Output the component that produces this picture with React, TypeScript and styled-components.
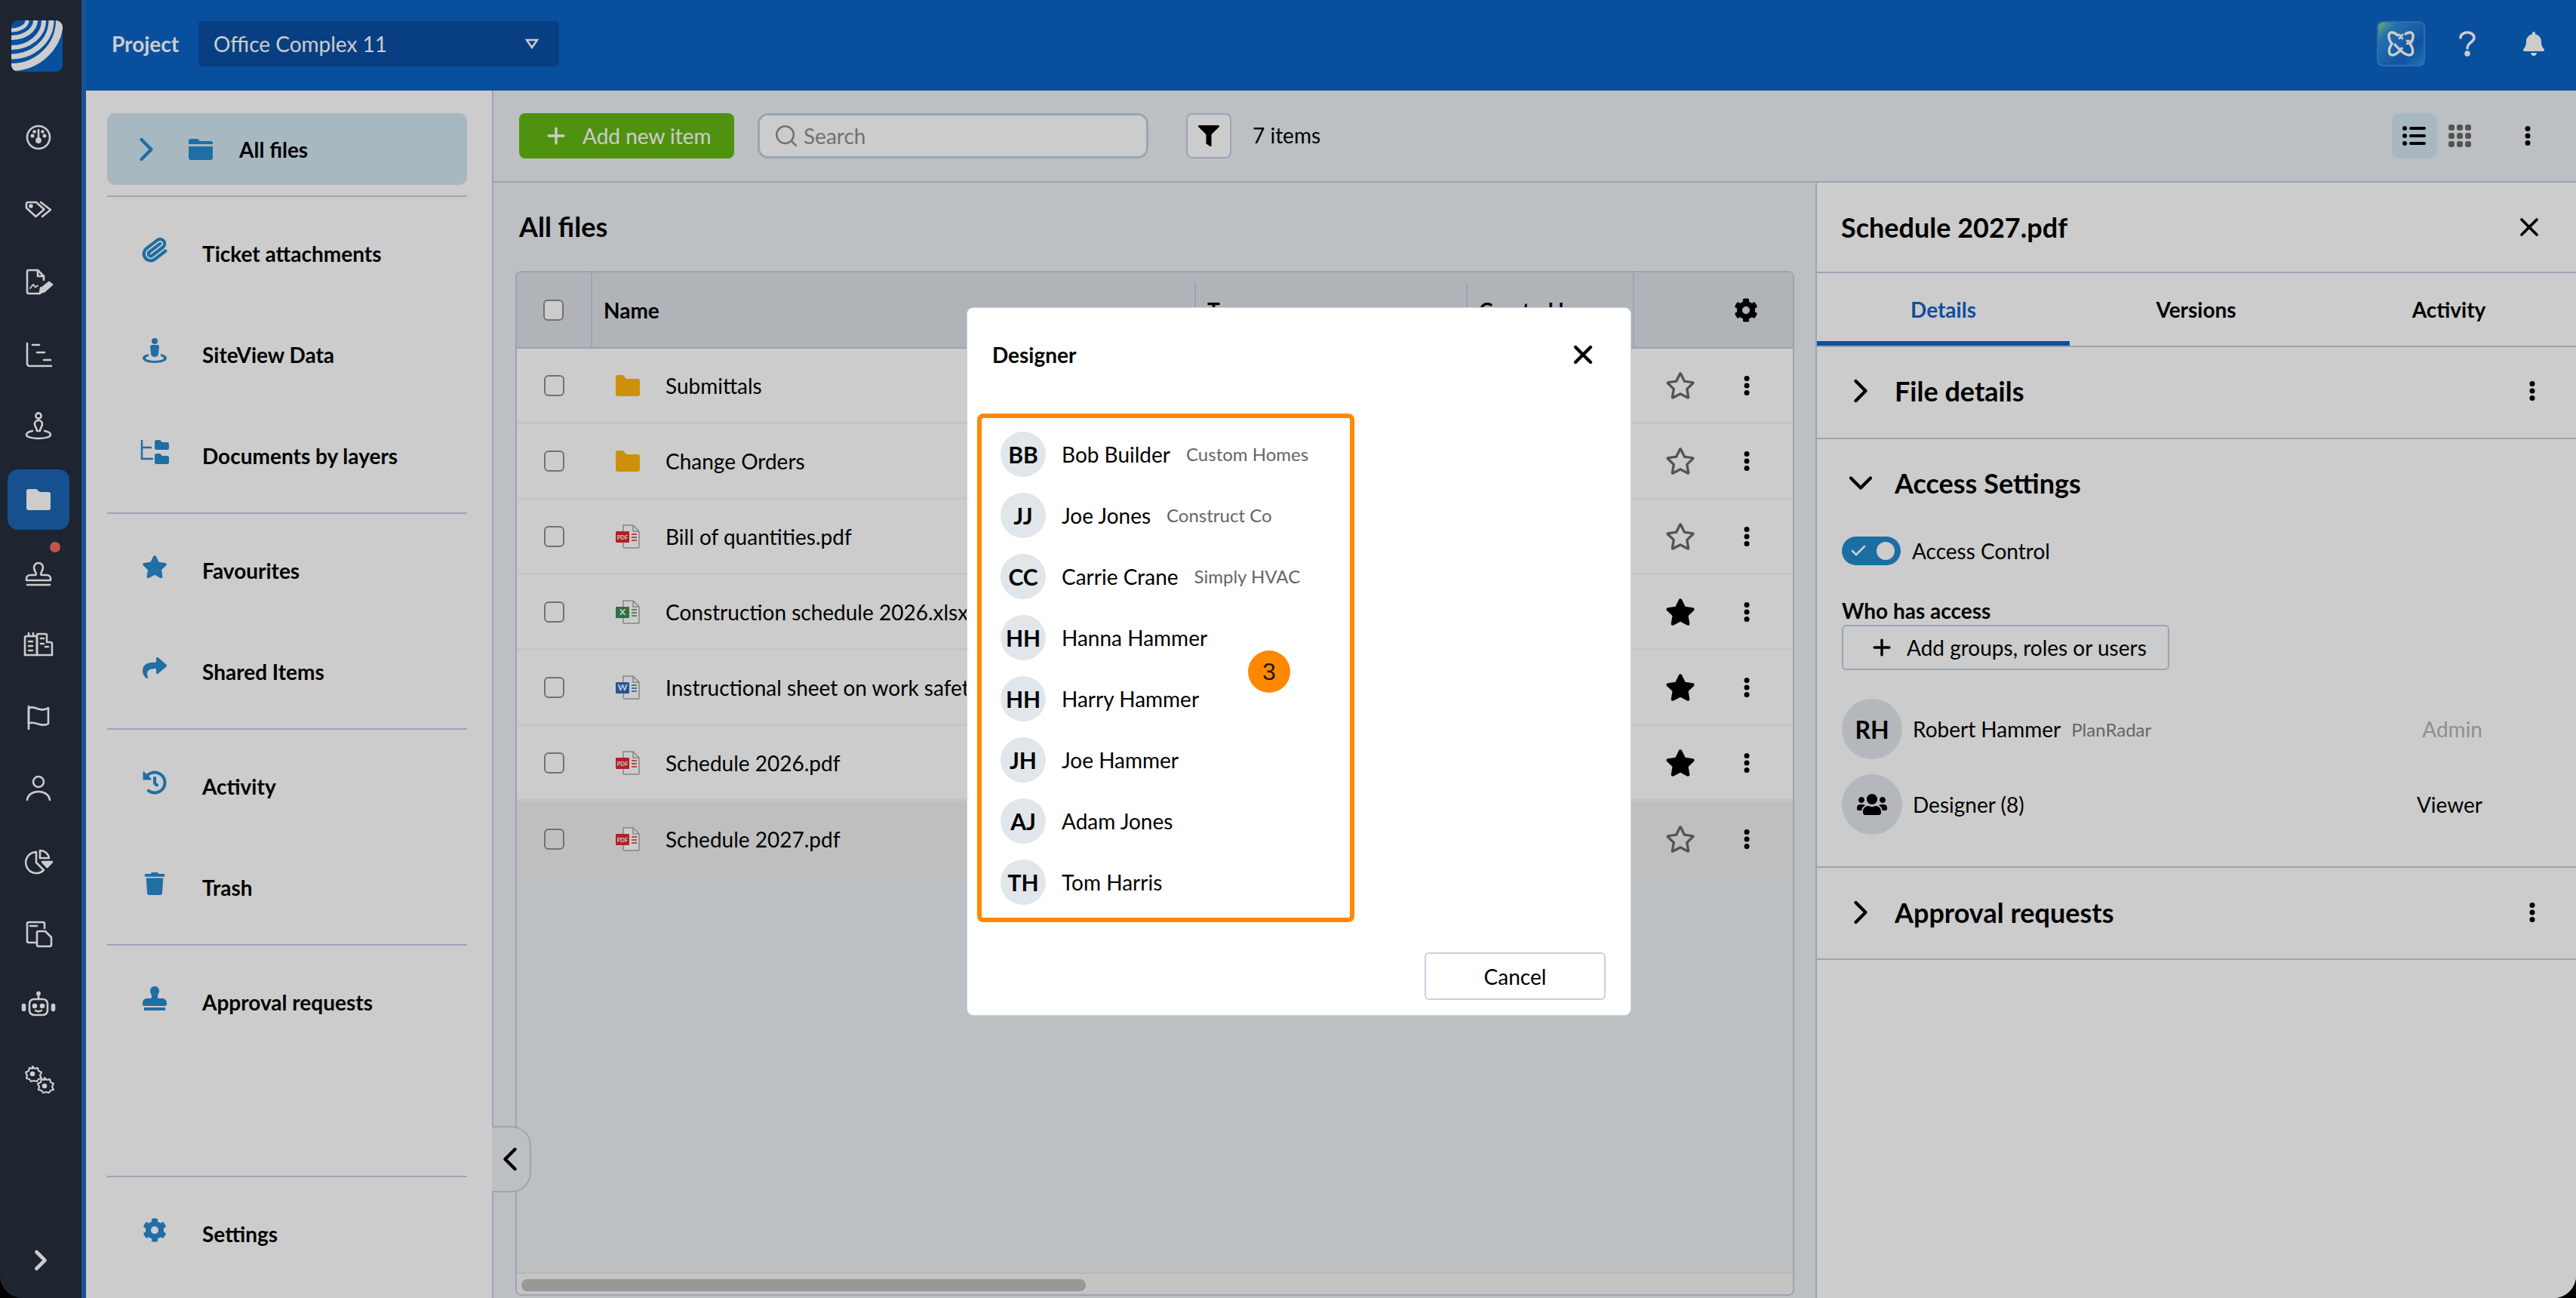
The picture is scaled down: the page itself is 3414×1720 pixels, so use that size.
import React from 'react';
import styled, { createGlobalStyle } from 'styled-components';
import { FaStar, FaRegStar, FaShare, FaHistory, FaTrash, FaStamp, FaCog, FaUsers, FaFilter, FaBell } from 'react-icons/fa';
import { ChevronRight, ChevronDown, ChevronLeft, Paperclip, Plus, Search, X, Check } from 'lucide-react';

const GlobalStyle = createGlobalStyle`
  html, body { margin: 0; padding: 0; background: #000; }
  * { box-sizing: border-box; }
  body { font-family: Lato, "Open Sans", sans-serif; color: #000; }
`;

const Page = styled.div`
  position: relative;
  display: flex;
  width: 3414px;
  height: 1720px;
  overflow: hidden;
  border-radius: 0 0 30px 30px;
`;

const Rail = styled.aside`
  flex: 0 0 114px;
  display: flex;
  flex-direction: column;
  background: #262e3c;
  border-right: 6px solid #2168b6;
  color: #fff;
`;

const LogoBox = styled.svg`
  display: block;
  width: 68px;
  height: 68px;
  margin: 27px 0 39px 15px;
  flex: none;
`;

const RailItem = styled.div<{ $active?: boolean }>`
  position: relative;
  display: flex;
  align-items: center;
  justify-content: center;
  width: 82px;
  height: 80px;
  margin: 8px 0 8px 10px;
  border-radius: 14px;
  background: ${(p) => (p.$active ? '#1c64b3' : 'transparent')};
`;

const RedDot = styled.span`
  position: absolute;
  left: 56px;
  top: 0;
  width: 14px;
  height: 14px;
  border-radius: 50%;
  background: #f26a5c;
`;

const RailFoot = styled.div`
  margin: auto 0 28px 0;
  display: flex;
  justify-content: center;
`;

const Column = styled.div`
  flex: 1;
  min-width: 0;
  display: flex;
  flex-direction: column;
`;

const TopBar = styled.header`
  flex: 0 0 120px;
  display: flex;
  align-items: flex-start;
  padding: 28px 0 0 34px;
  background: #0a64c6;
  color: #fff;
`;

const ProjectLabel = styled.div`
  width: 115px;
  height: 60px;
  line-height: 60px;
  font-size: 28px;
  font-weight: 700;
`;

const ProjectSelect = styled.div`
  width: 478px;
  height: 60px;
  display: flex;
  align-items: center;
  justify-content: space-between;
  padding: 0 26px 0 20px;
  background: #094fa3;
  border-radius: 4px;
  font-size: 28px;
`;

const TopActions = styled.div`
  margin-left: auto;
  display: flex;
  align-items: center;
  height: 60px;
`;

const AiButton = styled.div`
  width: 64px;
  height: 60px;
  display: flex;
  align-items: center;
  justify-content: center;
  border-radius: 8px;
  border: 2px solid #3f86dc;
  background: linear-gradient(135deg, #8fdc7e 0%, #2a8fdc 22%, #1668c8 70%, #2a8fdc 100%);
`;

const TopIcon = styled.div<{ $w: number }>`
  display: flex;
  align-items: center;
  justify-content: center;
  width: ${(p) => p.$w}px;
`;

const Body = styled.div`
  flex: 1;
  min-height: 0;
  display: flex;
`;

const NavPanel = styled.nav`
  flex: 0 0 540px;
  display: flex;
  flex-direction: column;
  padding: 30px 33px 18px 28px;
  background: #fff;
  border-right: 2px solid #c2cee1;
`;

const NavSelected = styled.div`
  flex: none;
  height: 95px;
  margin-bottom: 6px;
  display: flex;
  align-items: center;
  border-radius: 10px;
  background: #d3e7f2;
  font-size: 28px;
  font-weight: 700;
  color: #000;
`;

const NavChevron = styled.span`
  display: flex;
  width: 108px;
  padding-left: 26px;
  color: #278acd;
`;

const NavFolder = styled.span`
  display: flex;
  width: 67px;
  color: #278acd;
`;

const Divider = styled.div<{ $auto?: boolean }>`
  flex: none;
  height: 2px;
  margin: ${(p) => (p.$auto ? 'auto 0 8px' : '8px 0')};
  background: #c2cee1;
`;

const NavItem = styled.div`
  flex: none;
  height: 134px;
  display: flex;
  align-items: center;
  font-size: 28px;
  font-weight: 700;
`;

const NavIcon = styled.span`
  display: flex;
  justify-content: center;
  width: 126px;
  margin-top: -10px;
  color: #278acd;
`;

const Main = styled.main`
  flex: 1;
  min-width: 0;
  display: flex;
  flex-direction: column;
  background: #ebf0f4;
`;

const Toolbar = styled.div`
  flex: 0 0 122px;
  display: flex;
  align-items: flex-start;
  padding: 30px 60px 0 34px;
  border-bottom: 2px solid #c2cee1;
`;

const AddButton = styled.div`
  width: 285px;
  height: 60px;
  display: flex;
  align-items: center;
  gap: 18px;
  padding-left: 32px;
  border-radius: 8px;
  background: #63b713;
  color: #fff;
  font-size: 28px;
`;

const SearchBox = styled.div`
  width: 518px;
  height: 60px;
  margin-left: 31px;
  display: flex;
  align-items: center;
  gap: 6px;
  padding-left: 18px;
  border: 3px solid #c2cee1;
  border-radius: 14px;
  background: #fff;
  color: #8f8f8f;
  font-size: 28px;
`;

const FilterButton = styled.div`
  width: 60px;
  height: 60px;
  margin-left: 50px;
  display: flex;
  align-items: center;
  justify-content: center;
  border: 2px solid #c2cee1;
  border-radius: 8px;
  background: #fff;
`;

const ItemCount = styled.div`
  height: 60px;
  line-height: 58px;
  margin-left: 28px;
  font-size: 28px;
`;

const ViewGroup = styled.div`
  margin-left: auto;
  display: flex;
  align-items: center;
  height: 60px;
`;

const ViewButton = styled.div<{ $active?: boolean }>`
  width: 60px;
  height: 60px;
  display: flex;
  align-items: center;
  justify-content: center;
  border-radius: 10px;
  background: ${(p) => (p.$active ? '#d3e7f2' : 'transparent')};
`;

const MoreButton = styled.div`
  display: flex;
  margin-left: 56px;
`;

const Panes = styled.div`
  flex: 1;
  min-height: 0;
  display: flex;
`;

const CenterPane = styled.section`
  position: relative;
  flex: 1;
  min-width: 0;
  display: flex;
  flex-direction: column;
  padding: 0 28px 3px 29px;
`;

const PaneTitle = styled.h1`
  flex: 0 0 113px;
  margin: 0;
  padding: 0 0 0 5px;
  line-height: 117px;
  font-size: 36px;
  font-weight: 700;
`;

const Table = styled.div`
  flex: 1;
  min-height: 0;
  display: flex;
  flex-direction: column;
  border: 2px solid #c2cee1;
  border-radius: 8px;
  overflow: hidden;
`;

const HeadRow = styled.div`
  flex: 0 0 101px;
  display: flex;
  align-items: stretch;
  background: #dde2e6;
  border-bottom: 2px solid #c2cee1;
  font-size: 28px;
  font-weight: 700;
`;

const CheckCell = styled.div<{ $head?: boolean }>`
  flex: 0 0 100px;
  display: flex;
  align-items: center;
  justify-content: center;
  padding-right: 2px;
  border-right: ${(p) => (p.$head ? '2px solid #c2cee1' : 'none')};
`;

const CheckBox = styled.span<{ $head?: boolean }>`
  width: 27px;
  height: 28px;
  border: 2px solid #8a8f96;
  border-radius: 6px;
  background: ${(p) => (p.$head ? '#fff' : 'transparent')};
`;

const HeadCell = styled.div<{ $w: number; $line?: boolean }>`
  flex: 0 0 ${(p) => p.$w}px;
  display: flex;
  align-items: center;
  padding-left: ${(p) => (p.$line ? 17 : 15)}px;
  position: relative;
  ${(p) =>
    p.$line
      ? `&::before { content: ''; position: absolute; left: 0; top: 13px; bottom: 13px; width: 2px; background: #c2cee1; }`
      : ''}
`;

const HeadGear = styled.div`
  flex: 1;
  display: flex;
  align-items: center;
  justify-content: flex-end;
  padding-right: 46px;
  border-left: 2px solid #c2cee1;
`;

const FileRow = styled.div<{ $selected?: boolean }>`
  flex: 0 0 100px;
  display: flex;
  align-items: center;
  background: ${(p) => (p.$selected ? '#efefef' : '#fff')};
  border-bottom: ${(p) => (p.$selected ? 'none' : '3px solid #f5f5f5')};
  font-size: 28px;
`;

const FileIconWrap = styled.span`
  flex: 0 0 66px;
  display: flex;
  margin-left: 31px;
`;

const FileName = styled.span`
  flex: 0 1 400px;
  min-width: 0;
  white-space: nowrap;
  overflow: hidden;
`;

const StarCell = styled.span`
  flex: 0 0 54px;
  margin-left: auto;
  display: flex;
  justify-content: center;
  color: #6a6a6a;
`;

const RowKebab = styled.span`
  flex: 0 0 122px;
  display: flex;
  justify-content: center;
`;

const Spacer = styled.div`
  flex: 1;
`;

const ScrollTrack = styled.div`
  flex: 0 0 29px;
  padding: 7px 0 0 6px;
  background: #f5f5f5;
  border-top: 2px solid #e6e6e6;
`;

const ScrollThumb = styled.div`
  width: 748px;
  height: 16px;
  border-radius: 8px;
  background: #bfbfbf;
`;

const CollapseTab = styled.div`
  position: absolute;
  left: -2px;
  top: 1250px;
  width: 52px;
  height: 88px;
  display: flex;
  align-items: center;
  background: #ebf0f4;
  border: 2px solid #c2cee1;
  border-left: none;
  border-radius: 0 26px 26px 0;
  svg {
    margin-left: -2px;
    flex: none;
  }
`;

const DetailPane = styled.aside`
  flex: 0 0 1008px;
  display: flex;
  flex-direction: column;
  background: #fff;
  border-left: 2px solid #c2cee1;
`;

const DetailHead = styled.div`
  flex: 0 0 120px;
  display: flex;
  align-items: center;
  justify-content: space-between;
  padding: 0 42px 0 32px;
  border-bottom: 2px solid #c2cee1;
  font-size: 36px;
  font-weight: 700;
`;

const Tabs = styled.div`
  flex: 0 0 96px;
  display: flex;
  border-bottom: 2px solid #c2cee1;
`;

const Tab = styled.div<{ $active?: boolean }>`
  flex: 0 0 335px;
  height: 96px;
  display: flex;
  align-items: center;
  justify-content: center;
  padding-top: 5px;
  font-size: 28px;
  font-weight: 700;
  color: ${(p) => (p.$active ? '#1363c7' : '#000')};
  border-bottom: 6px solid ${(p) => (p.$active ? '#1363c7' : 'transparent')};
`;

const Section = styled.div`
  flex: none;
  border-bottom: 2px solid #c2cee1;
`;

const SectionHead = styled.div<{ $last?: boolean }>`
  height: 120px;
  display: flex;
  align-items: center;
  padding: 0 54px ${(p) => (p.$last ? 2 : 4)}px 40px;
  font-size: 36px;
  font-weight: 700;
`;

const SectionChevron = styled.span`
  display: flex;
  width: 71px;
  margin-left: -8px;
`;

const SectionKebab = styled.span`
  display: flex;
  margin-left: auto;
`;

const AccessBody = styled.div`
  padding: 9px 0 42px 33px;
`;

const ToggleRow = styled.div`
  display: flex;
  align-items: center;
  gap: 15px;
  height: 38px;
  font-size: 28px;
`;

const Toggle = styled.div`
  position: relative;
  width: 78px;
  height: 38px;
  border-radius: 19px;
  background: #228ace;
  color: #fff;
  display: flex;
  align-items: center;
  padding-left: 10px;
`;

const ToggleKnob = styled.span`
  position: absolute;
  right: 8px;
  top: 7px;
  width: 24px;
  height: 24px;
  border-radius: 50%;
  background: #fff;
`;

const WhoLabel = styled.div`
  margin-top: 42px;
  height: 37px;
  line-height: 37px;
  font-size: 28px;
  font-weight: 700;
`;

const AddAccess = styled.div`
  width: 434px;
  height: 60px;
  display: flex;
  align-items: center;
  gap: 16px;
  padding-left: 34px;
  border: 2px solid #c2cee1;
  border-radius: 6px;
  font-size: 28px;
`;

const AccessList = styled.div`
  margin-top: 38px;
  display: flex;
  flex-direction: column;
  gap: 20px;
`;

const AccessRow = styled.div`
  display: flex;
  align-items: center;
  gap: 14px;
  width: 849px;
  height: 80px;
  font-size: 28px;
`;

const AccessAvatar = styled.div`
  flex: 0 0 80px;
  height: 80px;
  border-radius: 50%;
  display: flex;
  align-items: center;
  justify-content: center;
  background: #e2e7eb;
  font-size: 32px;
  font-weight: 700;
`;

const OrgText = styled.span`
  font-size: 24px;
  color: #7f7f7f;
`;

const RoleText = styled.span<{ $muted?: boolean }>`
  margin-left: auto;
  color: ${(p) => (p.$muted ? '#b3b3b3' : '#000')};
`;

const Overlay = styled.div`
  position: absolute;
  inset: 0;
  background: rgba(0, 0, 0, 0.2);
`;

const Modal = styled.div`
  position: absolute;
  left: 1282px;
  top: 408px;
  width: 879px;
  height: 937px;
  display: flex;
  flex-direction: column;
  padding: 0 33px 20px 13px;
  border-radius: 8px;
  background: #fff;
  box-shadow: 0 0 0 1px #c4d0df;
`;

const ModalHead = styled.div`
  flex: 0 0 140px;
  display: flex;
  align-items: center;
  justify-content: space-between;
  padding: 0 10px 16px 20px;
  font-size: 28px;
  font-weight: 700;
`;

const PeopleBox = styled.div`
  position: relative;
  width: 500px;
  height: 674px;
  display: flex;
  flex-direction: column;
  padding: 7px 0 0 25px;
  border: 6px solid #ff8800;
  border-radius: 8px;
`;

const Person = styled.div`
  flex: 0 0 81px;
  height: 81px;
  display: flex;
  align-items: center;
  font-size: 28px;
`;

const PersonAvatar = styled.div`
  flex: 0 0 60px;
  height: 60px;
  margin-right: 21px;
  border-radius: 50%;
  display: flex;
  align-items: center;
  justify-content: center;
  background: #e1e6ea;
  font-size: 30px;
  font-weight: 700;
`;

const PersonOrg = styled.span`
  margin-left: 21px;
  font-size: 24px;
  color: #666;
`;

const CountBadge = styled.div`
  position: absolute;
  left: 353px;
  top: 308px;
  width: 56px;
  height: 56px;
  border-radius: 50%;
  display: flex;
  align-items: center;
  justify-content: center;
  background: #ff8800;
  font-family: "Liberation Sans", Arial, sans-serif;
  font-size: 32px;
  color: #1a1a1a;
`;

const ModalFoot = styled.div`
  margin-top: auto;
  display: flex;
  justify-content: flex-end;
`;

const CancelButton = styled.div`
  width: 240px;
  height: 63px;
  display: flex;
  align-items: center;
  justify-content: center;
  border: 2px solid #c4d0df;
  border-radius: 6px;
  font-size: 28px;
`;

const Logo = () => (
  <LogoBox viewBox="0 0 68 68">
    <defs>
      <clipPath id="logoClip">
        <rect width="68" height="68" rx="9" />
      </clipPath>
    </defs>
    <g clipPath="url(#logoClip)">
      <rect width="68" height="68" fill="#0a64c6" />
      <g fill="none" stroke="#fff">
        <ellipse cx="0" cy="0" rx="21" ry="13" strokeWidth="5" />
        <ellipse cx="0" cy="0" rx="32" ry="23" strokeWidth="6" />
        <ellipse cx="0" cy="0" rx="43" ry="36" strokeWidth="6" />
        <ellipse cx="0" cy="0" rx="53" ry="48" strokeWidth="7" />
        <ellipse cx="0" cy="0" rx="64" ry="62" strokeWidth="10" />
      </g>
    </g>
  </LogoBox>
);

const railStroke = {
  fill: 'none',
  stroke: 'currentColor',
  strokeWidth: 2.6,
  strokeLinecap: 'round' as const,
  strokeLinejoin: 'round' as const,
};

const RailSvg = ({ children }: { children: React.ReactNode }) => (
  <svg width="48" height="48" viewBox="0 0 48 48" {...railStroke}>
    {children}
  </svg>
);

const railIcons: React.ReactNode[] = [
  <RailSvg key="gauge">
    <circle cx="24" cy="24" r="15" />
    <path d="M24 14v12" />
    <circle cx="24" cy="28" r="2.6" fill="currentColor" />
    <circle cx="16" cy="22" r="1.2" fill="currentColor" />
    <circle cx="32" cy="22" r="1.2" fill="currentColor" />
    <circle cx="18.5" cy="16.5" r="1" fill="currentColor" />
    <circle cx="29.5" cy="16.5" r="1" fill="currentColor" />
  </RailSvg>,
  <RailSvg key="tags">
    <path d="M8 15.5v6l12.5 11.5 11-9.5L21 14H10a2 2 0 0 0-2 1.5z" />
    <circle cx="14" cy="19" r="1.4" fill="currentColor" />
    <path d="M27 14l13 10-11 9" />
  </RailSvg>,
  <RailSvg key="sign">
    <path d="M27 31.5l-1 7.5H11a2 2 0 0 1-2-2V10a2 2 0 0 1 2-2h12l8 8v5" />
    <path d="M23 8v8h8" />
    <path d="M13 32l4-5 3 3.5 3-2" strokeWidth="2" />
    <path d="M26 38l2-6 10-8 4 3-10 9z" fill="currentColor" />
  </RailSvg>,
  <RailSvg key="gantt">
    <path d="M9 9v27a3 3 0 0 0 3 3h29" />
    <path d="M16 11h9M22 21h10M31 31h9" />
  </RailSvg>,
  <RailSvg key="site">
    <circle cx="24" cy="9" r="3.6" />
    <path d="M24 15a5 5 0 0 0-5 5c0 4 3 5 3 9h4c0-4 3-5 3-9a5 5 0 0 0-5-5z" />
    <path d="M16 29c-5 1-8 3-8 5 0 3 7 5 16 5s16-2 16-5c0-2-3-4-8-5" />
  </RailSvg>,
  <svg key="folder" width="48" height="48" viewBox="0 0 48 48" fill="currentColor">
    <path d="M8 13a3 3 0 0 1 3-3h10l5 4h11a3 3 0 0 1 3 3v18a3 3 0 0 1-3 3H11a3 3 0 0 1-3-3z" />
  </svg>,
  <RailSvg key="stamp">
    <path d="M8 33c0-3 2-5 5-5h6c2 0 2-1 1.500-3-1-2-2.500-4-2.500-7a6 6 0 0 1 12 0c0 3-1.500 5-2.500 7-.5 2-.5 3 1.500 3h6c3 0 5 2 5 5v2H8z" />
    <path d="M9 41h30" />
  </RailSvg>,
  <RailSvg key="building">
    <path d="M6 38V15a2 2 0 0 1 2-2h12a2 2 0 0 1 2 2v23" />
    <path d="M22 38V12a2 2 0 0 1 2-2h9a2 2 0 0 1 2 2v9h5a2 2 0 0 1 2 2v15" />
    <path d="M6 38h36M11 13V9M17 13V9M11 20h5M11 26h5M11 32h5M27 16h4M27 23h4M33 27h4" />
  </RailSvg>,
  <RailSvg key="flag">
    <path d="M11 10v30" />
    <path d="M11 12c6-2 8 0 13 1.500s10 .5 13-1.500v21c-3 2-8 2-13 .5s-8-3-13-1z" />
  </RailSvg>,
  <RailSvg key="person">
    <circle cx="24" cy="14" r="7" />
    <path d="M9 38c1-7 7-11 15-11s14 4 15 11" />
  </RailSvg>,
  <RailSvg key="pie">
    <path d="M21 11a14 14 0 1 0 10 24l-10-10z" />
    <path d="M26 9c6 0 11 4 12 10H26z" />
    <path d="M29 24h13l-6.500 7z" fill="currentColor" />
  </RailSvg>,
  <RailSvg key="copy">
    <path d="M20 35h-9a2 2 0 0 1-2-2V10a2 2 0 0 1 2-2h19a2 2 0 0 1 2 2v6" />
    <path d="M13 13h9" />
    <path d="M22 22a2 2 0 0 1 2-2h9l8 8v10a2 2 0 0 1-2 2H24a2 2 0 0 1-2-2z" />
  </RailSvg>,
  <RailSvg key="bot">
    <path d="M24 7v7" />
    <circle cx="24" cy="6.500" r="1.600" fill="currentColor" />
    <rect x="12" y="14" width="24" height="21" rx="6" />
    <circle cx="19" cy="23" r="2" fill="currentColor" />
    <circle cx="29" cy="23" r="2" fill="currentColor" />
    <path d="M20 29c2 1.500 6 1.500 8 0" />
    <rect x="3" y="21" width="3" height="8" rx="1.500" fill="currentColor" />
    <rect x="42" y="21" width="3" height="8" rx="1.500" fill="currentColor" />
  </RailSvg>,
  <RailSvg key="gears">
    <path d="M16 7l3 3 4-1 1 4 4 2-2 4 2 4-4 1-2 3-4-1-4 1-2-3-4-1 1-4-2-4 4-2 1-4 4 1z" strokeWidth="2.200" />
    <circle cx="16" cy="17" r="2" fill="currentColor" />
    <path d="M32 22l3 3 4-1 1 4 4 2-2 4 2 4-4 1-2 3-4-1-4 1-2-3-4-1 1-4-2-4 4-2 1-4 4 1z" strokeWidth="2.200" />
    <circle cx="32" cy="33" r="2" fill="currentColor" />
  </RailSvg>,
];

const SiteIcon = () => (
  <svg width="34" height="34" viewBox="0 0 34 34" fill="currentColor">
    <circle cx="17" cy="4" r="4" />
    <path d="M11 11a3 3 0 0 1 3-2h6a3 3 0 0 1 3 2l-1 9c0 2-1 5-5 5s-5-3-5-5z" />
    <path d="M9 21C4 22 1 24 1 27c0 3 7 6 16 6s16-3 16-6c0-3-3-5-8-6v3c3 .5 4 2 4 3 0 1-5 3-12 3S5 28 5 27c0-1 1-2.500 4-3z" />
  </svg>
);

const LayersIcon = () => (
  <svg width="38" height="36" viewBox="0 0 38 36">
    <path d="M2 2v25h15M2 12h13" fill="none" stroke="currentColor" strokeWidth="2.500" />
    <path d="M19 5a3 3 0 0 1 3-3h4l3 3h6a3 3 0 0 1 3 3v5a2 2 0 0 1-2 2H21a2 2 0 0 1-2-2zM19 23a3 3 0 0 1 3-3h4l3 3h6a3 3 0 0 1 3 3v6a2 2 0 0 1-2 2H21a2 2 0 0 1-2-2z" fill="currentColor" />
  </svg>
);

const LargeFolder = () => (
  <svg width="32" height="28" viewBox="0 0 32 28" fill="currentColor">
    <path d="M0 3a3 3 0 0 1 3-3h9l3 3h14a3 3 0 0 1 3 3v1H0zM0 10h32v15a3 3 0 0 1-3 3H3a3 3 0 0 1-3-3z" />
  </svg>
);

const RowFolder = () => (
  <svg width="32" height="28" viewBox="0 0 32 28" fill="#ffb60a">
    <path d="M0 3a3 3 0 0 1 3-3h7l4 5h15a3 3 0 0 1 3 3v17a3 3 0 0 1-3 3H3a3 3 0 0 1-3-3z" />
  </svg>
);

const DocIcon = ({ color, label }: { color: string; label: string }) => (
  <svg width="32" height="32" viewBox="0 0 32 32">
    <path d="M10 1h13l8 8v21a1 1 0 0 1-1 1H11a1 1 0 0 1-1-1z" fill="#fff" stroke="#a8a8a8" strokeWidth="1.500" />
    <path d="M23 1v8h8" fill="none" stroke="#a8a8a8" strokeWidth="1.500" />
    <path d="M21 13h7M21 17h7M21 21h7" stroke={color} strokeWidth="1.500" />
    <rect x="0" y="9" width="18" height="15" rx="1" fill={color} />
    <text x="9" y="20" textAnchor="middle" fontSize={label.length > 1 ? 7.5 : 12} fontWeight="700" fontFamily="Lato, sans-serif" fill="#fff">
      {label}
    </text>
  </svg>
);

const AiGlyph = () => (
  <svg width="40" height="36" viewBox="0 0 40 36" fill="none" stroke="#fff" strokeWidth="3.400" strokeLinecap="round">
    <path d="M8 3c-6 0-5 9 0 15-5 7-5 15 1 15 5 0 9-5 12-9" />
    <path d="M32 3c6 0 5 9 0 15 5 7 5 15-1 15-6 0-12-6-19-14" />
    <path d="M8 3c4 0 6 2 8 4M32 3c-3 0-5 1-6 2" />
    <path d="M18 6l4 5M22 6l-4 5M28 14l3 4M31 14l-3 4" strokeWidth="2.800" />
  </svg>
);

const ListIcon = () => (
  <svg width="32" height="28" viewBox="0 0 32 28" fill="#000">
    <circle cx="3" cy="4" r="3" />
    <circle cx="3" cy="14" r="3" />
    <circle cx="3" cy="24" r="3" />
    <rect x="9" y="2" width="22" height="4" rx="2" />
    <rect x="9" y="12" width="22" height="4" rx="2" />
    <rect x="9" y="22" width="22" height="4" rx="2" />
  </svg>
);

const GridIcon = () => (
  <svg width="30" height="30" viewBox="0 0 30 30" fill="#6a6a6a">
    {[0, 1, 2].map((r) =>
      [0, 1, 2].map((c) => <rect key={`${r}${c}`} x={c * 11} y={r * 11} width="8" height="8" rx="3" />),
    )}
  </svg>
);

const Kebab = () => (
  <svg width="8" height="26" viewBox="0 0 8 26" fill="#000">
    <circle cx="4" cy="3.500" r="3.500" />
    <circle cx="4" cy="13" r="3.500" />
    <circle cx="4" cy="22.500" r="3.500" />
  </svg>
);

const files = [
  { name: 'Submittals', icon: <RowFolder /> },
  { name: 'Change Orders', icon: <RowFolder /> },
  { name: 'Bill of quantities.pdf', icon: <DocIcon color="#e0282e" label="PDF" /> },
  { name: 'Construction schedule 2026.xlsx', icon: <DocIcon color="#3f8a55" label="X" />, fav: true },
  { name: 'Instructional sheet on work safety.docx', icon: <DocIcon color="#2f6cc0" label="W" />, fav: true },
  { name: 'Schedule 2026.pdf', icon: <DocIcon color="#e0282e" label="PDF" />, fav: true },
  { name: 'Schedule 2027.pdf', icon: <DocIcon color="#e0282e" label="PDF" />, selected: true },
];

const people = [
  { initials: 'BB', name: 'Bob Builder', org: 'Custom Homes' },
  { initials: 'JJ', name: 'Joe Jones', org: 'Construct Co' },
  { initials: 'CC', name: 'Carrie Crane', org: 'Simply HVAC' },
  { initials: 'HH', name: 'Hanna Hammer' },
  { initials: 'HH', name: 'Harry Hammer' },
  { initials: 'JH', name: 'Joe Hammer' },
  { initials: 'AJ', name: 'Adam Jones' },
  { initials: 'TH', name: 'Tom Harris' },
];

export default function App() {
  return (
    <>
      <GlobalStyle />
      <Page>
        <Rail>
          <Logo />
          {railIcons.map((icon, i) => (
            <RailItem key={i} $active={i === 5}>
              {icon}
              {i === 6 && <RedDot />}
            </RailItem>
          ))}
          <RailFoot>
            <ChevronRight size={44} strokeWidth={2.6} />
          </RailFoot>
        </Rail>
        <Column>
          <TopBar>
            <ProjectLabel>Project</ProjectLabel>
            <ProjectSelect>
              Office Complex 11
              <svg width="20" height="14" viewBox="0 0 20 14" fill="none" stroke="currentColor" strokeWidth="2.500">
                <path d="M3 2h14l-7 10z" />
              </svg>
            </ProjectSelect>
            <TopActions>
              <AiButton>
                <AiGlyph />
              </AiButton>
              <TopIcon $w={112}>
                <svg width="24" height="34" viewBox="0 0 24 34" fill="none" stroke="#fff" strokeWidth="3.500" strokeLinecap="round">
                  <path d="M3 9c0-4 4-7 9-7s9 3 9 7c0 6-9 6-9 14" />
                  <circle cx="12" cy="30" r="2" fill="#fff" />
                </svg>
              </TopIcon>
              <TopIcon $w={64}>
                <FaBell size={32} />
              </TopIcon>
              <TopIcon $w={24} />
            </TopActions>
          </TopBar>
          <Body>
            <NavPanel>
              <NavSelected>
                <NavChevron>
                  <ChevronRight size={52} strokeWidth={2} />
                </NavChevron>
                <NavFolder>
                  <LargeFolder />
                </NavFolder>
                All files
              </NavSelected>
              <Divider />
              <NavItem>
                <NavIcon><Paperclip size={36} strokeWidth={2.8} style={{ transform: 'rotate(8deg)' }} /></NavIcon>
                Ticket attachments
              </NavItem>
              <NavItem>
                <NavIcon><SiteIcon /></NavIcon>
                SiteView Data
              </NavItem>
              <NavItem>
                <NavIcon><LayersIcon /></NavIcon>
                Documents by layers
              </NavItem>
              <Divider />
              <NavItem>
                <NavIcon><FaStar size={34} /></NavIcon>
                Favourites
              </NavItem>
              <NavItem>
                <NavIcon><FaShare size={32} /></NavIcon>
                Shared Items
              </NavItem>
              <Divider />
              <NavItem>
                <NavIcon><FaHistory size={32} /></NavIcon>
                Activity
              </NavItem>
              <NavItem>
                <NavIcon><FaTrash size={30} /></NavIcon>
                Trash
              </NavItem>
              <Divider />
              <NavItem>
                <NavIcon><FaStamp size={32} /></NavIcon>
                Approval requests
              </NavItem>
              <Divider $auto />
              <NavItem>
                <NavIcon><FaCog size={32} /></NavIcon>
                Settings
              </NavItem>
            </NavPanel>
            <Main>
              <Toolbar>
                <AddButton>
                  <Plus size={34} strokeWidth={2.4} />
                  Add new item
                </AddButton>
                <SearchBox>
                  <Search size={34} strokeWidth={1.8} />
                  Search
                </SearchBox>
                <FilterButton>
                  <FaFilter size={28} />
                </FilterButton>
                <ItemCount>7 items</ItemCount>
                <ViewGroup>
                  <ViewButton $active><ListIcon /></ViewButton>
                  <ViewButton><GridIcon /></ViewButton>
                  <MoreButton><Kebab /></MoreButton>
                </ViewGroup>
              </Toolbar>
              <Panes>
                <CenterPane>
                  <PaneTitle>All files</PaneTitle>
                  <Table>
                    <HeadRow>
                      <CheckCell $head><CheckBox $head /></CheckCell>
                      <HeadCell $w={798}>Name</HeadCell>
                      <HeadCell $w={360} $line>Type</HeadCell>
                      <HeadCell $w={221} $line>Created by</HeadCell>
                      <HeadGear><FaCog size={32} /></HeadGear>
                    </HeadRow>
                    {files.map((f) => (
                      <FileRow key={f.name} $selected={f.selected}>
                        <CheckCell><CheckBox /></CheckCell>
                        <FileIconWrap>{f.icon}</FileIconWrap>
                        <FileName>{f.name}</FileName>
                        <StarCell>
                          {f.fav ? <FaStar size={40} color="#000" /> : <FaRegStar size={40} />}
                        </StarCell>
                        <RowKebab><Kebab /></RowKebab>
                      </FileRow>
                    ))}
                    <Spacer />
                    <ScrollTrack><ScrollThumb /></ScrollTrack>
                  </Table>
                  <CollapseTab>
                    <ChevronLeft size={52} strokeWidth={2} />
                  </CollapseTab>
                </CenterPane>
                <DetailPane>
                  <DetailHead>
                    Schedule 2027.pdf
                    <X size={40} strokeWidth={2.2} />
                  </DetailHead>
                  <Tabs>
                    <Tab $active>Details</Tab>
                    <Tab>Versions</Tab>
                    <Tab>Activity</Tab>
                  </Tabs>
                  <Section>
                    <SectionHead>
                      <SectionChevron><ChevronRight size={52} strokeWidth={2} /></SectionChevron>
                      File details
                      <SectionKebab><Kebab /></SectionKebab>
                    </SectionHead>
                  </Section>
                  <Section>
                    <SectionHead>
                      <SectionChevron><ChevronDown size={52} strokeWidth={2} /></SectionChevron>
                      Access Settings
                    </SectionHead>
                    <AccessBody>
                      <ToggleRow>
                        <Toggle>
                          <Check size={24} strokeWidth={2.6} />
                          <ToggleKnob />
                        </Toggle>
                        Access Control
                      </ToggleRow>
                      <WhoLabel>Who has access</WhoLabel>
                      <AddAccess>
                        <Plus size={34} strokeWidth={2.4} />
                        Add groups, roles or users
                      </AddAccess>
                      <AccessList>
                        <AccessRow>
                          <AccessAvatar>RH</AccessAvatar>
                          Robert Hammer
                          <OrgText>PlanRadar</OrgText>
                          <RoleText $muted>Admin</RoleText>
                        </AccessRow>
                        <AccessRow>
                          <AccessAvatar><FaUsers size={40} /></AccessAvatar>
                          Designer (8)
                          <RoleText>Viewer</RoleText>
                        </AccessRow>
                      </AccessList>
                    </AccessBody>
                  </Section>
                  <Section>
                    <SectionHead $last>
                      <SectionChevron><ChevronRight size={52} strokeWidth={2} /></SectionChevron>
                      Approval requests
                      <SectionKebab><Kebab /></SectionKebab>
                    </SectionHead>
                  </Section>
                </DetailPane>
              </Panes>
            </Main>
          </Body>
        </Column>
        <Overlay />
        <Modal>
          <ModalHead>
            Designer
            <X size={40} strokeWidth={2.6} />
          </ModalHead>
          <PeopleBox>
            {people.map((p) => (
              <Person key={p.name}>
                <PersonAvatar>{p.initials}</PersonAvatar>
                {p.name}
                {p.org && <PersonOrg>{p.org}</PersonOrg>}
              </Person>
            ))}
            <CountBadge>3</CountBadge>
          </PeopleBox>
          <ModalFoot>
            <CancelButton>Cancel</CancelButton>
          </ModalFoot>
        </Modal>
      </Page>
    </>
  );
}
